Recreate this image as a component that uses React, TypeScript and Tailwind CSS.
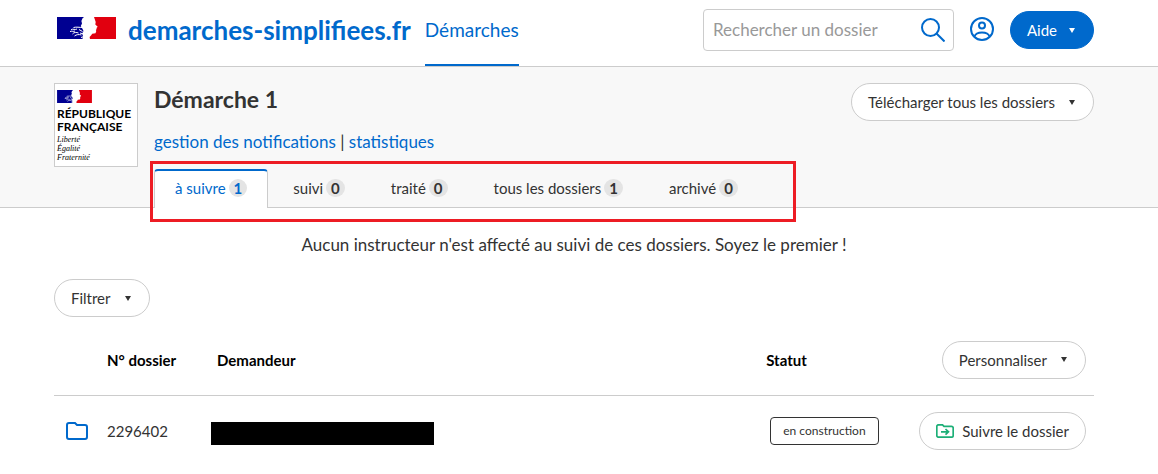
import React from 'react';

function Flag({ className }: { className: string }) {
  return (
    <svg viewBox="0 0 59 22" className={className} aria-hidden="true">
      <path fill="#000091" d="M0 0h27l-1.600 1.500-1 2.500.6 2.500-1.200 2.500 1.500 2.500 1.200 2.500-1.300 2.500.8 2.500L25.500 22H0z" />
      <path fill="#e1000f" d="M37 0h22v22H33l-.4-2 1.600-1.800 1-1.500 3.300-.5.8-2.200-.5-1 .9-1-.2-1 1.200-1.200L38.300 7.500l.4-2.500z" />
      <path
        fill="none"
        stroke="#fff"
        strokeWidth="1"
        d="M16.500 10.500c3-.8 6 0 9 0M14 12.800c2-1.500 4 .5 6-.8M13 14.500c2-.6 3.500.3 5-.5M15.500 17c1.500-2 4-1.800 6-1M17.500 19c2-1.500 4-1.800 7-1M22 12.500l3.500 2M23 16l3.500 1M24 20.500l3-1"
      />
    </svg>
  );
}

function Caret() {
  return (
    <svg viewBox="0 0 6 5" className="h-[5px] w-[6px]" fill="currentColor" aria-hidden="true">
      <path d="M0 0h6L3 5z" />
    </svg>
  );
}

function MenuButton({ label, primary = false }: { label: string; primary?: boolean }) {
  return (
    <button
      type="button"
      aria-haspopup="menu"
      className={
        'flex h-[38px] shrink-0 items-center rounded-full border pr-[18px] whitespace-nowrap text-[15px] leading-5 ' +
        (primary
          ? 'gap-3 border-[#0069cc] bg-[#0069cc] pl-4 text-white'
          : 'gap-3.5 border-[#cccccc] bg-white pl-4')
      }
    >
      {label}
      <Caret />
    </button>
  );
}

const tabs = [
  { label: 'à suivre', count: 1, active: true },
  { label: 'suivi', count: 0 },
  { label: 'traité', count: 0 },
  { label: 'tous les dossiers', count: 1 },
  { label: 'archivé', count: 0 },
];

export default function App() {
  return (
    <div className="font-['Lato',sans-serif] text-[17px] leading-6 text-[#333333]">
      <header className="flex h-[67px] items-start border-b border-[#cccccc] bg-white pr-16 pl-[57px]">
        <a href="#accueil" className="flex h-[60px] items-center gap-3 text-[26px] font-bold text-[#0069cc]">
          <Flag className="mb-1 h-[22px] w-[59px]" />
          demarches-simplifiees.fr
        </a>
        <nav className="ml-3.5">
          <a href="#demarches" className="flex h-[66px] items-center border-b-2 border-[#0069cc] pb-1 text-[19px] text-[#0069cc]">
            Démarches
          </a>
        </nav>
        <div className="ml-auto flex h-[60px] items-center">
          <form role="search" className="flex h-[42px] w-[251px] items-center rounded border border-[#cccccc] pr-2 pl-[9px]">
            <input
              type="search"
              aria-label="Rechercher un dossier"
              placeholder="Rechercher un dossier"
              className="min-w-0 flex-1 bg-transparent outline-none placeholder:text-[#999999]"
            />
            <button type="submit" aria-label="Rechercher" className="text-[#0069cc]">
              <svg viewBox="0 0 24 24" className="size-6" fill="none" stroke="currentColor" strokeWidth="2" aria-hidden="true">
                <circle cx="9.500" cy="9.500" r="8.500" />
                <path d="M15.500 15.500L23.500 23.500" />
              </svg>
            </button>
          </form>
          <button type="button" aria-label="Mon compte" className="mb-0.5 ml-4 text-[#0069cc]">
            <svg viewBox="0 0 24 24" className="size-6" fill="none" stroke="currentColor" strokeWidth="2" aria-hidden="true">
              <circle cx="12" cy="12" r="11" />
              <circle cx="12" cy="8.500" r="3" />
              <path d="M4.500 19.500c1-3 4-4 7.500-4s6.500 1 7.500 4" />
            </svg>
          </button>
          <div className="ml-4">
            <MenuButton label="Aide" primary />
          </div>
        </div>
      </header>

      <section className="relative flex gap-4 border-b border-[#cccccc] bg-[#f8f8f8] pt-4 pr-16 pl-[54px]">
        <div className="flex size-[84px] shrink-0 flex-col border border-[#cccccc] bg-white pt-1.5 pl-0.5 text-black">
          <Flag className="h-[13px] w-[35px]" />
          <p className="mt-1 text-xs leading-[13px] font-bold">
            RÉPUBLIQUE
            <br />
            FRANÇAISE
          </p>
          <p className="mt-0.5 font-['Liberation_Serif',serif] text-[8px] leading-[9px] italic">
            Liberté
            <br />
            Égalité
            <br />
            Fraternité
          </p>
        </div>
        <div className="flex-1">
          <div className="flex justify-between">
            <h1 className="text-[23px] leading-8 font-bold">Démarche 1</h1>
            <MenuButton label="Télécharger tous les dossiers" />
          </div>
          <p className="mt-[9px]">
            <a href="#notifications" className="text-[#0069cc]">gestion des notifications</a>
            {' | '}
            <a href="#statistiques" className="text-[#0069cc]">statistiques</a>
          </p>
          <nav className="mt-[15px] -mb-px flex gap-1 text-[15px] leading-5">
            {tabs.map((tab) => (
              <a
                key={tab.label}
                href="#dossiers"
                className={
                  'flex h-[39px] items-center gap-[3px] rounded-t border-x border-t-2 px-5 pb-[3px] whitespace-nowrap ' +
                  (tab.active ? 'border-x-[#cccccc] border-t-[#0069cc] bg-white text-[#0069cc]' : 'border-transparent')
                }
              >
                {tab.label}
                <span className="flex h-[18px] items-center rounded-full bg-[#e4e4e4] px-[5px] font-bold">{tab.count}</span>
              </a>
            ))}
          </nav>
        </div>
        <div className="pointer-events-none absolute top-[94px] left-[150px] h-[61px] w-[646px] border-3 border-[#ed1c24]" />
      </section>

      <main className="pr-16 pl-[54px]">
        <p className="mt-[25px] text-center">Aucun instructeur n'est affecté au suivi de ces dossiers. Soyez le premier !</p>
        <div className="mt-[22px]">
          <MenuButton label="Filtrer" />
        </div>
        <table className="mt-2 w-full text-left text-[15px] leading-5">
          <thead>
            <tr className="h-[70px] border-b border-[#cccccc] text-black">
              <th className="w-[53px]" aria-label="Dossier" />
              <th className="w-[104px] font-bold">N° dossier</th>
              <th className="pl-1.5 font-bold">Demandeur</th>
              <th className="w-[153px] font-bold">Statut</th>
              <th className="w-[171px] pr-2 font-normal text-[#333333]">
                <div className="flex justify-end">
                  <MenuButton label="Personnaliser" />
                </div>
              </th>
            </tr>
          </thead>
          <tbody>
            <tr className="h-[71px]">
              <td className="pl-3 text-[#0069cc]">
                <svg viewBox="0 0 22 18" className="h-[18px] w-[22px]" fill="none" stroke="currentColor" strokeWidth="2" aria-hidden="true">
                  <path d="M3 1h6l2 2h8a2 2 0 0 1 2 2v10a2 2 0 0 1-2 2H3a2 2 0 0 1-2-2V3a2 2 0 0 1 2-2z" />
                </svg>
              </td>
              <td>2296402</td>
              <td>
                <div className="mt-1.5 h-[23px] w-[223px] bg-black" />
              </td>
              <td className="pl-1">
                <span className="inline-flex h-7 items-center rounded border border-[#333333] px-3 text-xs whitespace-nowrap">
                  en construction
                </span>
              </td>
              <td className="pr-2">
                <div className="flex justify-end">
                  <button type="button" className="flex h-[38px] items-center gap-2 rounded-full border border-[#cccccc] bg-white px-4 whitespace-nowrap">
                    <svg viewBox="0 0 18 14" className="h-[14px] w-[18px] text-[#1caf77]" fill="none" stroke="currentColor" strokeWidth="1.700" aria-hidden="true">
                      <path d="M2.500.8h4l1.500 1.500h7.500a1.700 1.700 0 0 1 1.700 1.700v7.500a1.700 1.700 0 0 1-1.700 1.700h-13A1.700 1.700 0 0 1 .8 11.500v-9A1.700 1.700 0 0 1 2.500.8z" />
                      <path d="M5 7.800h7M9.500 5l3 2.800-3 2.800" />
                    </svg>
                    Suivre le dossier
                  </button>
                </div>
              </td>
            </tr>
          </tbody>
        </table>
      </main>
    </div>
  );
}
